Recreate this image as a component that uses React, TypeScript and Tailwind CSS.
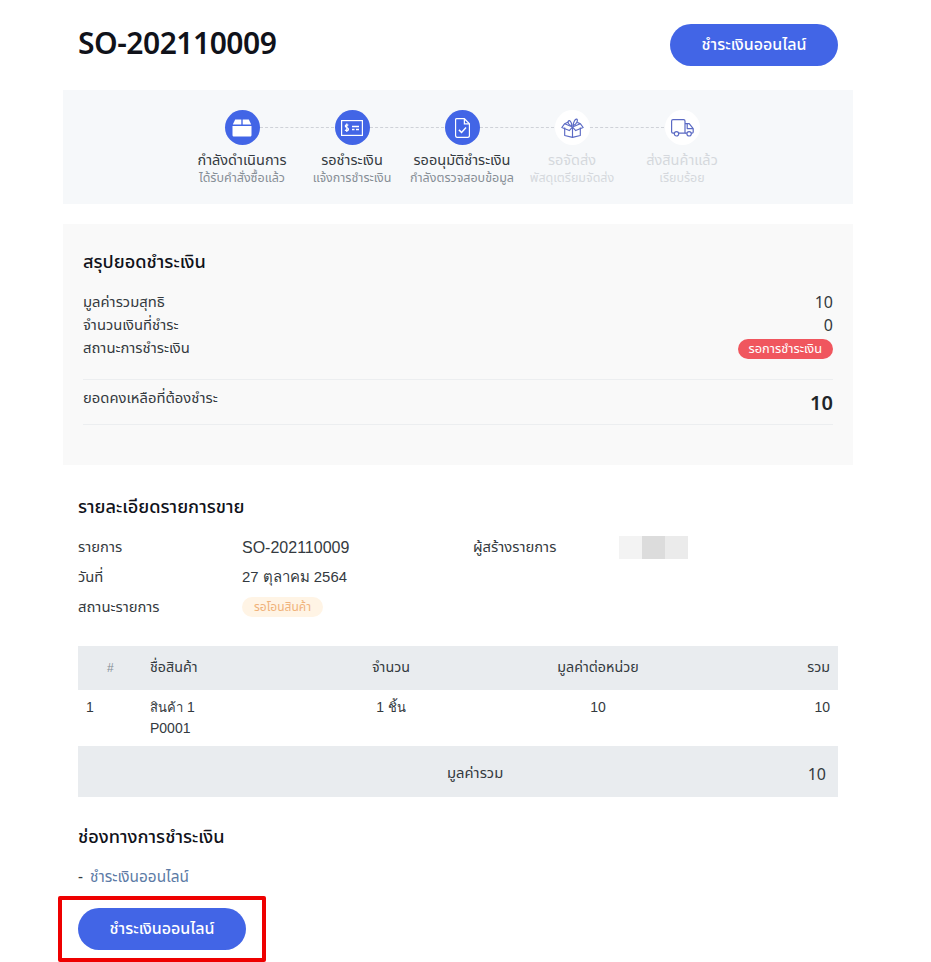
const thai = { fontFamily: '"Noto Sans Thai", "Noto Sans", Inter, "Liberation Sans", sans-serif' }

function BoxIcon() {
  return (
    <svg width="20" height="18" viewBox="0 0 20 18" fill="#fff">
      <path d="M3.2 0.5H9.3V5.5H0.8L3.2 0.5Z" />
      <path d="M10.7 0.5H16.8L19.2 5.5H10.7V0.5Z" />
      <path d="M0.5 7H19.5V16C19.5 17 18.8 17.6 18 17.6H2C1.2 17.6 0.5 17 0.5 16V7Z" />
    </svg>
  )
}

function BillIcon() {
  return (
    <svg width="22" height="16" viewBox="0 0 22 16" fill="none" stroke="#fff" strokeWidth="1.2">
      <rect x="0.6" y="0.6" width="20.8" height="14.8" />
      <path d="M11 6.5H18M11 9.5H13.5M15 9.5H18" strokeWidth="1.4" />
      <path d="M7.3 5.3C6.8 4.6 4.3 4.3 4.3 6C4.3 7.8 7.5 7.2 7.5 9.2C7.5 11 5 10.8 4 10M5.8 3.6V12" strokeWidth="1.2" />
    </svg>
  )
}

function DocIcon() {
  return (
    <svg width="15" height="20" viewBox="0 0 16 21" fill="none" stroke="#fff" strokeWidth="1.3">
      <path d="M1.8 0.6H10L15.4 6V18.6C15.4 19.6 14.8 20.4 13.8 20.4H2.2C1.2 20.4 0.6 19.6 0.6 18.6V1.8C0.6 1.2 1.2 0.6 1.8 0.6Z" />
      <path d="M10 0.8V6H15.2" />
      <path d="M4.2 12.5L7 15.3L11.8 10" strokeWidth="1.6" />
    </svg>
  )
}

function GiftIcon() {
  return (
    <svg width="23" height="20" viewBox="0 0 24 21" fill="none" stroke="#5b6ac4" strokeWidth="1.2" strokeLinejoin="round">
      <path d="M3.8 10V18.4L12 20.4L20.2 18.4V10" />
      <path d="M12 9.5V20.4" />
      <path d="M12 9.5L3.8 6L0.8 10L8.6 13.2L12 9.5Z" />
      <path d="M12 9.5L20.2 6L23.2 10L15.4 13.2L12 9.5Z" />
      <path d="M3.8 6L8 4M20.2 6L17 4.6" />
      <path d="M11.5 8C8 7.8 6.5 4.6 7.6 3.2C8.8 1.8 11 4 11.5 8Z" />
      <path d="M12.5 8C13 4.5 14.6 0.6 16.4 1.2C18.2 2 16.5 6.5 12.5 8Z" />
    </svg>
  )
}

function TruckIcon() {
  return (
    <svg width="23" height="18" viewBox="0 0 23 18" fill="none" stroke="#5b6ac4" strokeWidth="1.2" strokeLinejoin="round">
      <path d="M3.2 14.2H2C1.2 14.2 0.6 13.6 0.6 12.8V2C0.6 1.2 1.2 0.6 2 0.6H12.6C13.4 0.6 14 1.2 14 2V14.2H7.8" />
      <path d="M14 4.6H18.2L22.2 9.6V13C22.2 13.7 21.7 14.2 21 14.2H20.4M15.8 14.2H14" />
      <path d="M16.2 4.8V9.6H22" />
      <circle cx="5.5" cy="14.8" r="2.2" />
      <circle cx="18.1" cy="14.8" r="2.2" />
    </svg>
  )
}

const steps = [
  { title: 'กำลังดำเนินการ', sub: 'ได้รับคำสั่งซื้อแล้ว', icon: <BoxIcon />, active: true },
  { title: 'รอชำระเงิน', sub: 'แจ้งการชำระเงิน', icon: <BillIcon />, active: true },
  { title: 'รออนุมัติชำระเงิน', sub: 'กำลังตรวจสอบข้อมูล', icon: <DocIcon />, active: true },
  { title: 'รอจัดส่ง', sub: 'พัสดุเตรียมจัดส่ง', icon: <GiftIcon />, active: false },
  { title: 'ส่งสินค้าแล้ว', sub: 'เรียบร้อย', icon: <TruckIcon />, active: false },
]

function PayButton({ className }: { className: string }) {
  return (
    <button className={`h-[42px] rounded-full bg-[#4265e6] text-[16px] font-medium text-white ${className}`}>
      ชำระเงินออนไลน์
    </button>
  )
}

export default function App() {
  return (
    <div style={thai} className="h-[962px] w-[931px] overflow-hidden bg-white text-[14.8px] text-[#343a40]">
      <div className="ml-[63px] w-[790px]">
        <div className="flex h-[90px] items-center justify-between pl-[15px]">
          <h1 className="text-[30px] font-semibold leading-none tracking-[-0.5px] text-[#10121a]">SO-202110009</h1>
          <PayButton className="mr-[15px] w-[168px]" />
        </div>

        <div className="flex h-[114px] bg-[#f6f8fa] pl-[124px] pt-[20px]">
          {steps.map((s, i) => (
            <div key={s.title} className="relative flex w-[110px] flex-col items-center">
              {i < steps.length - 1 && (
                <div className="absolute left-[73px] top-[17px] w-[74px] border-t border-dashed border-[#cfd2d8]" />
              )}
              <div className={`flex h-[35px] w-[35px] items-center justify-center rounded-full ${s.active ? 'bg-[#4265e6]' : 'bg-white'}`}>
                {s.icon}
              </div>
              <p className={`mt-[6px] whitespace-nowrap text-[14.5px] leading-[20px] ${s.active ? 'text-[#343a40]' : 'text-[#d5d8dd]'}`}>{s.title}</p>
              <p className={`whitespace-nowrap text-[12.5px] leading-[15px] ${s.active ? 'text-[#868e96]' : 'text-[#d5d8dd]'}`}>{s.sub}</p>
            </div>
          ))}
        </div>

        <div className="mt-[20px] h-[241px] bg-[#f9f9f9] px-[20px] pt-[27px]">
          <h2 className="text-[18.2px] font-medium leading-[24px] text-[#10121a]">สรุปยอดชำระเงิน</h2>
          <div className="mt-[16px] flex h-[23px] items-center justify-between">
            <span className="pt-[2px]">มูลค่ารวมสุทธิ</span>
            <span className="text-[16px]">10</span>
          </div>
          <div className="flex h-[23px] items-center justify-between">
            <span className="pt-[2px]">จำนวนเงินที่ชำระ</span>
            <span className="text-[16px]">0</span>
          </div>
          <div className="flex h-[23px] items-center justify-between">
            <span className="pt-[2px]">สถานะการชำระเงิน</span>
            <span className="rounded-full bg-[#f0565e] px-[11px] text-[12.8px] leading-[20px] text-white">รอการชำระเงิน</span>
          </div>
          <div className="mt-[19px] flex h-[46px] justify-between border-y border-[#eceef0] pt-[7px]">
            <span className="leading-[23px]">ยอดคงเหลือที่ต้องชำระ</span>
            <span className="text-[20px] font-semibold leading-[35px] text-[#212529]">10</span>
          </div>
        </div>

        <div className="px-[15px]">
          <h2 className="mt-[31px] text-[18.2px] font-medium leading-[24px] text-[#10121a]">รายละเอียดรายการขาย</h2>
          <div className="mt-[12px] flex h-[30px] items-center">
            <span className="w-[164px] pt-[2px]">รายการ</span>
            <span className="w-[231px] pt-[2px] font-['Liberation_Sans'] text-[16px]">SO-202110009</span>
            <span className="w-[146px] pt-[2px]">ผู้สร้างรายการ</span>
            <div className="flex">
              <div className="h-[23px] w-[23px] bg-[#f3f3f3]" />
              <div className="h-[23px] w-[23px] bg-[#dcdcdc]" />
              <div className="h-[23px] w-[23px] bg-[#ebebeb]" />
            </div>
          </div>
          <div className="flex h-[30px] items-center">
            <span className="w-[164px] pt-[2px]">วันที่</span>
            <span className="font-['Liberation_Sans'] text-[14.9px]">27 ตุลาคม 2564</span>
          </div>
          <div className="flex h-[30px] items-center">
            <span className="w-[164px] pt-[2px]">สถานะรายการ</span>
            <span className="rounded-full bg-[#fff4e5] px-[12px] text-[12px] leading-[20px] text-[#f0b27a]">รอโอนสินค้า</span>
          </div>

          <div className="mt-[24px] flex h-[44px] items-center bg-[#e9ecef] text-[14.3px]">
            <span className="w-[72px] pl-[29px] font-['Liberation_Sans'] text-[12px] text-[#868e96]">#</span>
            <span className="w-[170px]">ชื่อสินค้า</span>
            <span className="w-[142px] text-center">จำนวน</span>
            <span className="w-[272px] text-center">มูลค่าต่อหน่วย</span>
            <span className="flex-1 pr-[8px] text-right">รวม</span>
          </div>
          <div className="flex h-[56px] pt-[7px] font-['Liberation_Sans'] text-[14px] leading-[20px]">
            <span className="w-[72px] pl-[8px]">1</span>
            <div className="w-[170px]">
              <p><span className="text-[13px]">สินค้า</span> 1</p>
              <p>P0001</p>
            </div>
            <span className="w-[142px] whitespace-nowrap text-center">1 <span className="text-[13px]">ชิ้น</span></span>
            <span className="w-[272px] text-center">10</span>
            <span className="flex-1 pr-[8px] text-right">10</span>
          </div>
          <div className="flex h-[51px] items-center bg-[#e9ecef] pl-[369px] pr-[12px] pt-[6px]">
            <span className="flex-1">มูลค่ารวม</span>
            <span className="text-[16px]">10</span>
          </div>

          <h2 className="mt-[29px] text-[18.2px] font-medium leading-[24px] text-[#10121a]">ช่องทางการชำระเงิน</h2>
          <p className="mt-[18px] text-[15.4px] leading-[20px] text-[#5c7ba6]">
            <span className="mr-[7px] text-[#343a40]">-</span>ชำระเงินออนไลน์
          </p>
        </div>

        <div className="ml-[-5px] mt-[8px] flex h-[66px] w-[208px] items-center justify-center rounded-[2px] border-[4px] border-[#ee0000]">
          <PayButton className="w-[168px]" />
        </div>
      </div>
    </div>
  )
}
